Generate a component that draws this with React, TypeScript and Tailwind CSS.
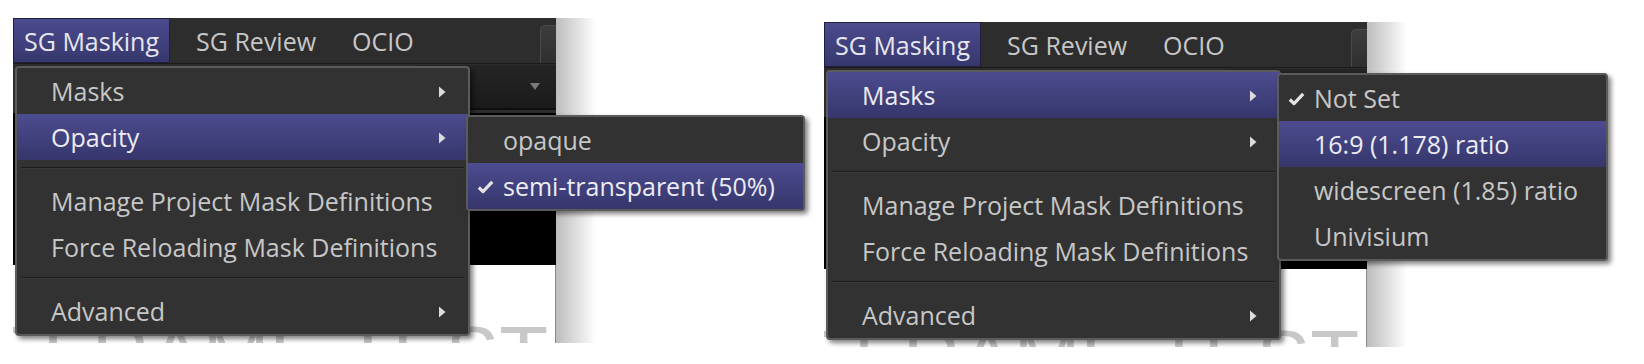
import React from 'react';

type Entry =
  | { kind: 'sep' }
  | { kind: 'item'; label: string; active?: boolean; checked?: boolean; submenu?: boolean };

const sep: Entry = { kind: 'sep' };

function Arrow() {
  return (
    <svg width="8" height="12" viewBox="0 0 8 12" className="shrink-0">
      <path d="M1 0.5 L7.5 6 L1 11.5 Z" fill="#dcdcdc" />
    </svg>
  );
}

function Check() {
  return (
    <svg width="17" height="14" viewBox="0 0 17 14">
      <path d="M1.8 7.5 L6 11.6 L15.2 1.8" fill="none" stroke="#e4e4e4" strokeWidth="3.2" strokeLinejoin="round" />
    </svg>
  );
}

function MenuRow({ entry, sub }: { entry: Entry; sub?: boolean }) {
  if (entry.kind === 'sep') {
    return (
      <div className="mx-[4px] mt-[7px] mb-[9px]">
        <div className="h-px bg-[#1d1d1d]" />
        <div className="h-px bg-[#3b3b3b]" />
      </div>
    );
  }
  return (
    <div
      className={
        'h-[46px] flex items-center pr-[22px] pt-[2px] ' +
        (sub ? 'pl-[9px] ' : 'pl-[8px] ') +
        (entry.active
          ? 'bg-linear-to-b from-[#4c4c90] to-[#36366c] text-[#ececf2]'
          : 'text-[#c7c7c7]')
      }
    >
      <div className="w-[26px] flex items-center">{entry.checked && <Check />}</div>
      <span className="whitespace-nowrap">{entry.label}</span>
      {entry.submenu && (
        <div className="ml-auto">
          <Arrow />
        </div>
      )}
    </div>
  );
}

function Popup({ entries, className, sub }: { entries: Entry[]; className: string; sub?: boolean }) {
  return (
    <div
      className={
        'absolute z-10 bg-[#323232] border-2 border-[#5b5b5b] rounded-[4px] shadow-[3px_3px_5px_rgba(0,0,0,0.5)] ' +
        className
      }
    >
      {entries.map((e, i) => (
        <MenuRow key={i} entry={e} sub={sub} />
      ))}
    </div>
  );
}

function MenuBar() {
  return (
    <div className="h-[46px] flex items-stretch gap-[16px] border-b border-[#1b1b1b]">
      <div className="px-[10px] pt-[3px] flex items-center bg-linear-to-b from-[#4b4b8f] to-[#37376e] border border-[#1f1f3c] text-[#e6e6ee]">
        SG Masking
      </div>
      <div className="px-[10px] pt-[3px] flex items-center text-[#c7c7c7]">SG Review</div>
      <div className="px-[10px] pt-[3px] flex items-center text-[#c7c7c7]">OCIO</div>
      <div className="ml-auto mt-[7px] w-[16px] rounded-tl-[5px] border-l border-t border-[#4a4a4a] bg-linear-to-b from-[#3d3d3d] to-[#2f2f2f]" />
    </div>
  );
}

function Panel({ main, sub, subClass }: { main: Entry[]; sub: Entry[]; subClass: string }) {
  return (
    <div className="flex">
      <div className="relative w-[543px] h-[325px] bg-[#2d2d2d] flex flex-col">
        <MenuBar />
        <div className="h-[49px] flex justify-end items-start">
          <div className="mt-px w-[140px] h-[45px] bg-linear-to-b from-[#252525] to-[#1a1a1a] border-b-2 border-[#0e0e0e] flex items-center justify-end pr-[16px]">
            <svg width="10" height="7" viewBox="0 0 10 7">
              <path d="M0 0 L10 0 L5 7 Z" fill="#7a7a7a" />
            </svg>
          </div>
        </div>
        <div className="h-[152px] bg-black" />
        <div className="flex-1 bg-white border-r border-[#8a8a8a] overflow-hidden flex justify-end pr-[7px] pt-[50px]">
          <span className="font-['Liberation_Sans',sans-serif] text-[80px] leading-none text-[#c8c8c8] whitespace-nowrap">
            SAFE FRAME TEST
          </span>
        </div>
        <Popup entries={main} className="left-[2px] top-[48px] w-[455px]" />
        <Popup entries={sub} className={subClass} sub />
      </div>
      <div className="w-[40px] h-[325px] bg-linear-to-r from-[#bdbdbd] to-white" />
    </div>
  );
}

export default function App() {
  const leftMain: Entry[] = [
    { kind: 'item', label: 'Masks', submenu: true },
    { kind: 'item', label: 'Opacity', submenu: true, active: true },
    sep,
    { kind: 'item', label: 'Manage Project Mask Definitions' },
    { kind: 'item', label: 'Force Reloading Mask Definitions' },
    sep,
    { kind: 'item', label: 'Advanced', submenu: true },
  ];
  const leftSub: Entry[] = [
    { kind: 'item', label: 'opaque' },
    { kind: 'item', label: 'semi-transparent (50%)', checked: true, active: true },
  ];
  const rightMain: Entry[] = [
    { kind: 'item', label: 'Masks', submenu: true, active: true },
    { kind: 'item', label: 'Opacity', submenu: true },
    sep,
    { kind: 'item', label: 'Manage Project Mask Definitions' },
    { kind: 'item', label: 'Force Reloading Mask Definitions' },
    sep,
    { kind: 'item', label: 'Advanced', submenu: true },
  ];
  const rightSub: Entry[] = [
    { kind: 'item', label: 'Not Set', checked: true },
    { kind: 'item', label: '16:9 (1.178) ratio', active: true },
    { kind: 'item', label: 'widescreen (1.85) ratio' },
    { kind: 'item', label: 'Univisium' },
  ];

  return (
    <div className="w-[1644px] h-[364px] bg-white flex items-start overflow-hidden font-['Open_Sans','Noto_Sans',sans-serif] text-[25px]">
      <div className="ml-[13px] mt-[18px]">
        <Panel main={leftMain} sub={leftSub} subClass="left-[453px] top-[97px] w-[339px]" />
      </div>
      <div className="ml-[228px] mt-[22px]">
        <Panel main={rightMain} sub={rightSub} subClass="left-[453px] top-[51px] w-[331px]" />
      </div>
    </div>
  );
}
